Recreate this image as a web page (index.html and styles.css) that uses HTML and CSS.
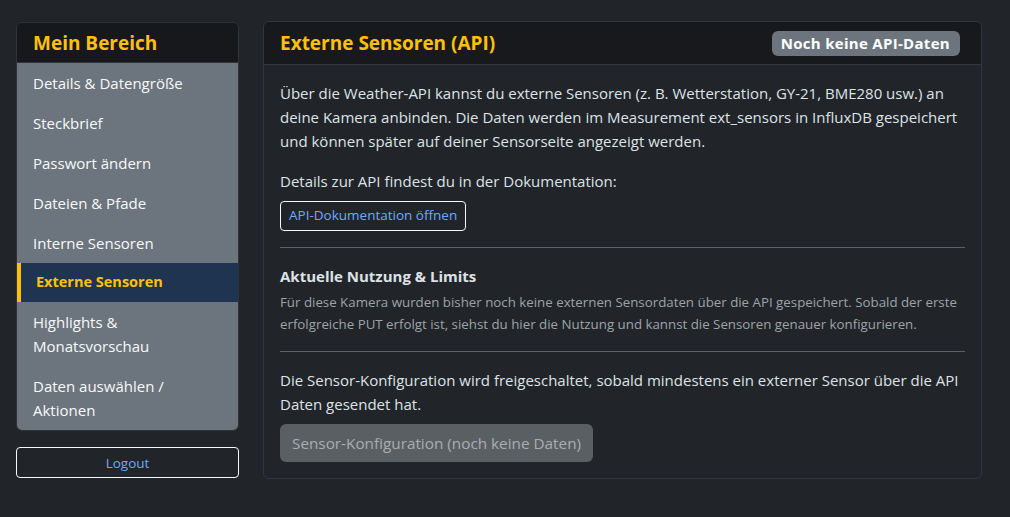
FILE: index.html
```html
<!DOCTYPE html>
<html lang="de">
<head>
<meta charset="utf-8">
<title>Externe Sensoren</title>
<link rel="stylesheet" href="styles.css">
</head>
<body>
<div class="layout">
  <aside class="sidebar">
    <div class="side-card">
      <div class="side-head">Mein Bereich</div>
      <nav class="side-list">
        <a class="side-item">Details &amp; Datengröße</a>
        <a class="side-item">Steckbrief</a>
        <a class="side-item">Passwort ändern</a>
        <a class="side-item">Dateien &amp; Pfade</a>
        <a class="side-item">Interne Sensoren</a>
        <a class="side-item active">Externe Sensoren</a>
        <a class="side-item">Highlights &amp; Monatsvorschau</a>
        <a class="side-item">Daten auswählen / Aktionen</a>
      </nav>
    </div>
    <button class="btn-logout">Logout</button>
  </aside>
  <main class="main-card">
    <div class="main-head">
      <h2 class="main-title">Externe Sensoren (API)</h2>
      <span class="badge">Noch keine API-Daten</span>
    </div>
    <div class="main-body">
      <p class="para">Über die Weather-API kannst du externe Sensoren (z. B. Wetterstation, GY-21, BME280 usw.) an deine Kamera anbinden. Die Daten werden im Measurement ext_sensors in InfluxDB gespeichert und können später auf deiner Sensorseite angezeigt werden.</p>
      <p class="para tight">Details zur API findest du in der Dokumentation:</p>
      <a class="btn-doc">API-Dokumentation öffnen</a>
      <hr class="rule">
      <h3 class="sub-title">Aktuelle Nutzung &amp; Limits</h3>
      <p class="small-note">Für diese Kamera wurden bisher noch keine externen Sensordaten über die API gespeichert. Sobald der erste erfolgreiche PUT erfolgt ist, siehst du hier die Nutzung und kannst die Sensoren genauer konfigurieren.</p>
      <hr class="rule">
      <p class="para tight">Die Sensor-Konfiguration wird freigeschaltet, sobald mindestens ein externer Sensor über die API Daten gesendet hat.</p>
      <button class="btn-disabled" disabled>Sensor-Konfiguration (noch keine Daten)</button>
    </div>
  </main>
</div>
</body>
</html>
```

FILE: styles.css
```css
* { box-sizing: border-box; }
html, body { margin: 0; padding: 0; }
body {
  background: #212529;
  color: #dee2e6;
  font-family: "Open Sans", "Noto Sans", sans-serif;
  font-size: 15px;
  line-height: 24px;
}
.layout {
  display: flex;
  align-items: flex-start;
  gap: 24px;
  padding: 21px 28px 0 16px;
}
.sidebar {
  width: 223px;
  flex: 0 0 223px;
  display: flex;
  flex-direction: column;
  gap: 16px;
  margin-top: 1px;
}
.side-card {
  border: 1px solid #2f343a;
  border-radius: 6px;
  overflow: hidden;
}
.side-head {
  background: #16181b;
  color: #ffc107;
  font-weight: 700;
  font-size: 19px;
  height: 40px;
  line-height: 40px;
  padding-left: 16px;
  border-bottom: 1px solid #2f343a;
}
.side-list { display: flex; flex-direction: column; background: #6c757d; }
.side-item {
  display: block;
  color: #f8f9fa;
  padding: 8px 16px;
  line-height: 24px;
}
.side-item.active {
  background: #1e3450;
  color: #ffc107;
  font-weight: 700;
  font-size: 14.5px;
  border-left: 4px solid #ffc107;
  padding-left: 15px;
  height: 39px;
  padding-top: 7px;
}
.btn-logout {
  height: 31px;
  background: transparent;
  border: 1px solid #f8f9fa;
  border-radius: 4px;
  color: #6ea8fe;
  font-family: inherit;
  font-size: 13.5px;
}
.main-card {
  flex: 1;
  border: 1px solid #32373d;
  border-radius: 6px;
  overflow: hidden;
}
.main-head {
  background: #17191c;
  height: 43px;
  border-bottom: 1px solid #32373d;
  display: flex;
  align-items: center;
  justify-content: space-between;
  padding: 0 21px 0 16px;
}
.main-title {
  margin: 0;
  color: #ffc107;
  font-size: 19px;
  font-weight: 700;
}
.badge {
  background: #6c757d;
  color: #fff;
  font-weight: 700;
  font-size: 15px;
  line-height: 25px;
  height: 25px;
  padding: 0 10px 0 9px;
  border-radius: 6px;
  letter-spacing: 0.3px;
}
.main-body { padding: 16px 16px 16px 16px; }
.para { margin: 0 0 16px; }
.para.tight { margin-bottom: 8px; }
.btn-doc {
  display: inline-block;
  border: 1px solid #f8f9fa;
  border-radius: 4px;
  color: #6ea8fe;
  font-size: 13.5px;
  line-height: 21px;
  padding: 3px 8px 4px;
}
.rule {
  border: 0;
  border-top: 1px solid #5b6066;
  margin: 16px 0;
}
.sub-title {
  margin: 0 0 3px;
  font-size: 15px;
  font-weight: 700;
  line-height: 24px;
}
.small-note {
  margin: 0;
  color: #9ea3a8;
  font-size: 13.3px;
  line-height: 22px;
}
.btn-disabled {
  display: block;
  height: 38px;
  padding: 0 12px;
  background: #5a5f64;
  color: #a9adb1;
  border: 0;
  border-radius: 6px;
  font-family: inherit;
  font-size: 15.3px;
}
```
